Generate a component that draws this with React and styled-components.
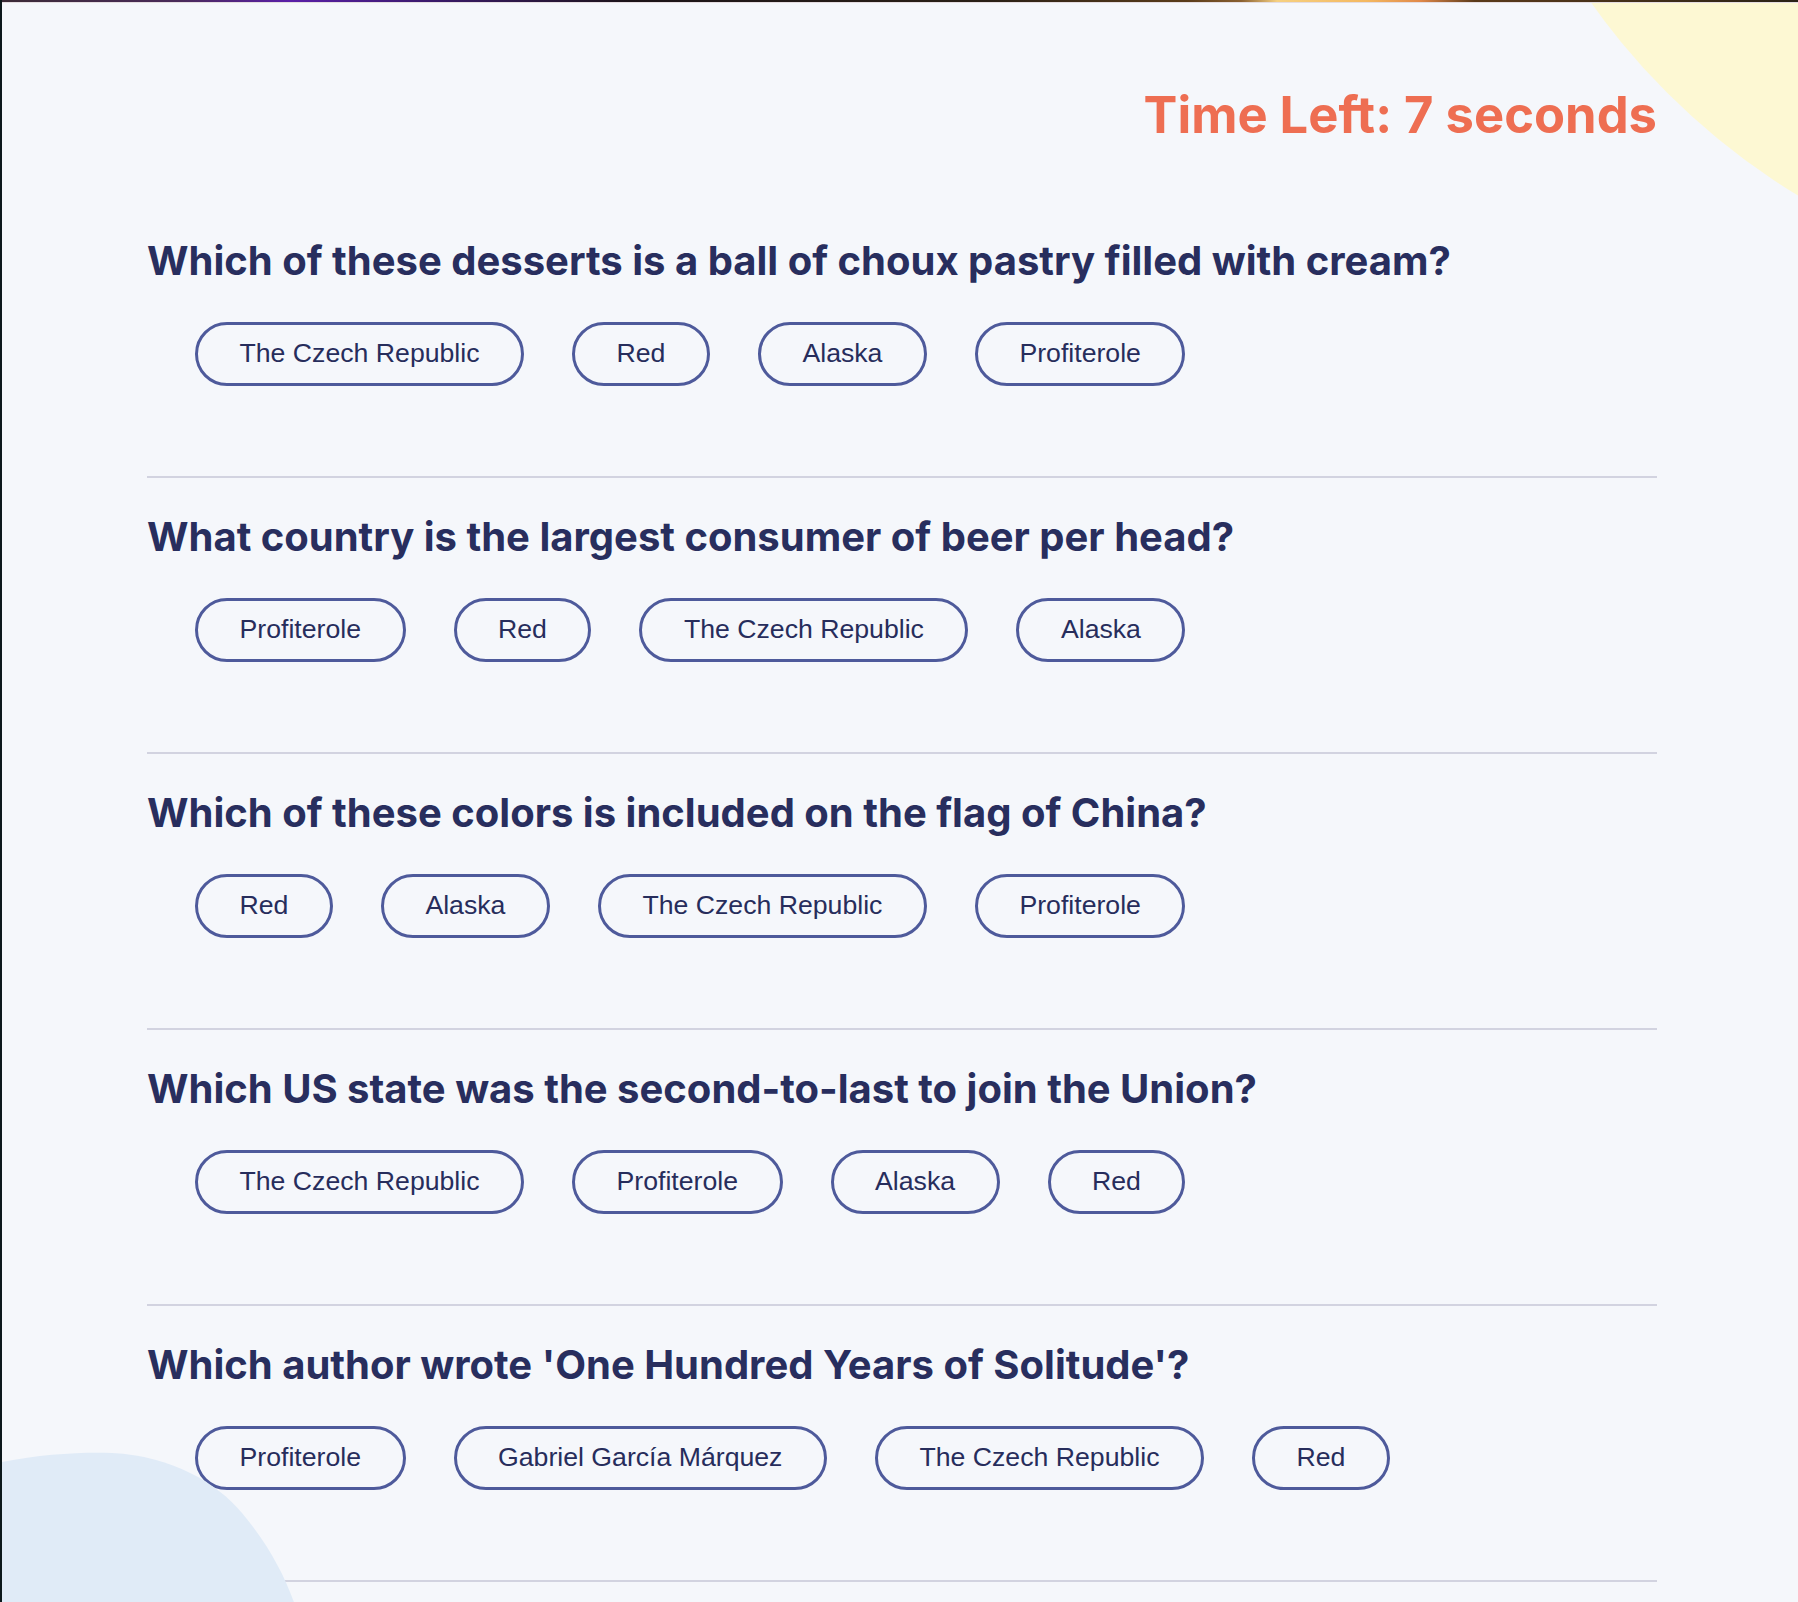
import React from "react";
import styled, { createGlobalStyle } from "styled-components";

const GlobalStyle = createGlobalStyle`
  html, body { margin: 0; padding: 0; background: #f5f7fb; }
  * { box-sizing: border-box; }
`;

const questions = [
  { q: "Which of these desserts is a ball of choux pastry filled with cream?", a: ["The Czech Republic", "Red", "Alaska", "Profiterole"] },
  { q: "What country is the largest consumer of beer per head?", a: ["Profiterole", "Red", "The Czech Republic", "Alaska"] },
  { q: "Which of these colors is included on the flag of China?", a: ["Red", "Alaska", "The Czech Republic", "Profiterole"] },
  { q: "Which US state was the second-to-last to join the Union?", a: ["The Czech Republic", "Profiterole", "Alaska", "Red"] },
  { q: "Which author wrote 'One Hundred Years of Solitude'?", a: ["Profiterole", "Gabriel García Márquez", "The Czech Republic", "Red"] },
];

const Frame = styled.div`
  position: relative;
  min-height: 100vh;
  overflow: hidden;
  border-left: 2px solid #0c181b;
  background: #f5f7fb;
`;

const TopStrip = styled.div`
  position: relative;
  z-index: 3;
  height: 3px;
  background: linear-gradient(90deg, #3b2a36 0%, #4a2a5a 10%, #5a1fa8 16%, #3a1a6a 24%, #1c1418 35%, #2a2016 55%, #5a3c1a 66%, #8a6030 69%, #f6d080 71%, #f4b860 76%, #e08848 79%, #5a3a1a 82%, #2a2216 100%);
  border-bottom: 1px solid #e4dce0;
`;

const Main = styled.main`
  position: relative;
  z-index: 1;
  padding: 82px 141px 0 145px;
`;

const TimerRow = styled.div`
  display: flex;
  justify-content: flex-end;
`;

const Timer = styled.h2`
  margin: 0;
  font-family: Inter, "Open Sans", sans-serif;
  font-weight: 700;
  font-size: 50.7px;
  line-height: 60px;
  color: #ee6e52;
`;

const List = styled.div`
  margin-top: 92px;
  display: flex;
  flex-direction: column;
`;

const Block = styled.section`
  padding: 35.5px 0 90px;
  border-bottom: 2px solid #d2d3e0;
  &:first-child { padding-top: 0; }
`;

const Question = styled.h3`
  margin: 0;
  font-family: Inter, "Open Sans", sans-serif;
  font-weight: 700;
  font-size: 40px;
  line-height: 48px;
  color: #282e5e;
`;

const Options = styled.div`
  display: flex;
  gap: 48px;
  padding-left: 48px;
  margin-top: 36.5px;
`;

const Pill = styled.button`
  display: inline-flex;
  align-items: center;
  height: 64px;
  padding: 0 41.5px;
  border: 3px solid #4e5a9b;
  border-radius: 32px;
  background: transparent;
  font-family: "Liberation Sans", Arial, sans-serif;
  font-size: 26.67px;
  color: #272d5c;
  cursor: pointer;
`;

const YellowBlob = styled.div`
  position: absolute;
  left: 1461px;
  top: -1097px;
  width: 1394px;
  height: 1394px;
  border-radius: 50%;
  background: #fdf8d3;
  z-index: 0;
`;

const BlueBlob = styled.svg`
  position: absolute;
  left: 0;
  top: 1438px;
  z-index: 2;
`;

export default function App() {
  return (
    <>
      <GlobalStyle />
      <Frame>
        <TopStrip />
        <YellowBlob />
        <Main>
          <TimerRow>
            <Timer>Time Left: 7 seconds</Timer>
          </TimerRow>
          <List>
            {questions.map((item, i) => (
              <Block key={i}>
                <Question>{item.q}</Question>
                <Options>
                  {item.a.map((opt) => (
                    <Pill key={opt}>{opt}</Pill>
                  ))}
                </Options>
              </Block>
            ))}
          </List>
        </Main>
        <BlueBlob width="320" height="170" viewBox="0 0 320 170">
          <path d="M0,24 C40,16 80,14 110,15 C170,18 215,45 240,75 C265,105 282,135 294,170 L0,170 Z" fill="#e0ebf7" />
        </BlueBlob>
      </Frame>
    </>
  );
}
